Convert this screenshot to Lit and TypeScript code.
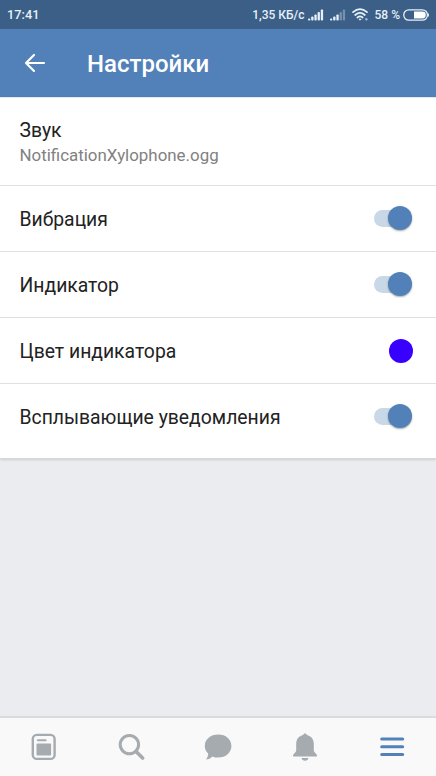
import { LitElement, html, css, svg } from 'lit';
import { customElement, property, state } from 'lit/decorators.js';
import { classMap } from 'lit/directives/class-map.js';

// clock, network and battery strip at the top
@customElement('status-bar')
export class StatusBar extends LitElement {
  static styles = css`
    :host {
      display: flex;
      align-items: center;
      height: 29px;
      box-sizing: border-box;
      padding: 0 7px 0 7px;
      background: #3b5f87;
      color: #e6f0fa;
      font-size: 12px;
      font-weight: 500;
      line-height: 30px;
      white-space: pre;
    }

    .time {
      flex: 1;
      font-size: 12.8px;
    }

    .speed {
      font-size: 12px;
    }

    .percent {
      font-size: 12px;
      margin-left: 6px;
    }

    svg {
      display: block;
      flex: none;
    }

    .signal {
      margin-left: 3px;
    }

    .second {
      margin-left: 6px;
    }

    .wifi {
      margin-left: 6px;
    }

    .battery {
      margin-left: 3px;
    }
  `;

  // five rising bars, the ones above the level are dimmed
  signal(level: number, cls: string) {
    return html`
      <svg class="signal ${cls}" width="16" height="12" viewBox="0 0 16 12" fill="#e6f0fa">
        ${[2, 4, 6, 8.5, 11].map(
          (h, i) => svg`<rect x=${i * 3.2} y=${11.5 - h} width="2.3" height=${h} rx=".8" opacity=${i < level ? 1 : 0.35} />`
        )}
      </svg>
    `;
  }

  render() {
    return html`
      <span class="time">17:41</span>
      <span class="speed">1,35 КБ/с</span>
      ${this.signal(5, '')} ${this.signal(3, 'second')}
      <svg class="wifi" width="17" height="13" viewBox="0 0 17 13" fill="none" stroke="#e6f0fa" stroke-width="1.7" stroke-linecap="round">
        <path d="M1 4.2Q8 -1.8 15 4.2M3.2 7Q8 2.8 12.8 7M5.4 9.5Q8 7.3 10.6 9.5" />
        <circle cx="8" cy="11.4" r=".7" fill="#e6f0fa" stroke-width=".8" />
        <circle cx="14.4" cy="11.3" r="1.2" fill="#8fb6e6" stroke="none" />
      </svg>
      <span class="percent">58 %</span>
      <svg class="battery" width="26" height="12" viewBox="0 0 26 12">
        <rect x=".8" y=".8" width="23.6" height="10.4" rx="5" fill="none" stroke="#e6f0fa" stroke-width="1.3" />
        <path d="M11 2.6H19.4A3.4 3.4 0 0 1 19.4 9.4H11Z" fill="#fff" />
        <path d="M25.3 4.4V7.6" stroke="#e6f0fa" stroke-width="1.2" />
      </svg>
    `;
  }
}

@customElement('toggle-switch')
export class ToggleSwitch extends LitElement {
  @property({ type: Boolean }) on = false;

  static styles = css`
    :host {
      display: block;
    }

    .track {
      display: flex;
      align-items: center;
      width: 38px;
      height: 17px;
      border-radius: 9px;
      background: #d5d7da;
    }

    .knob {
      width: 24px;
      height: 24px;
      flex: none;
      border-radius: 50%;
      background: #f5f5f5;
      box-shadow: 0 1px 2px rgba(0, 0, 0, 0.35);
    }

    .on {
      justify-content: flex-end;
      background: #c8d8e7;
    }

    .on .knob {
      background: #5181b8;
    }
  `;

  render() {
    return html`
      <div class="track ${classMap({ on: this.on })}">
        <div class="knob"></div>
      </div>
    `;
  }
}

@customElement('tab-bar')
export class TabBar extends LitElement {
  static styles = css`
    :host {
      display: grid;
      grid-template-columns: repeat(5, 1fr);
      height: 60px;
      box-sizing: border-box;
      border-top: 2px solid #d9dbdc;
      background: #f9f9fa;
      color: #a6abb0;
    }

    .tab {
      display: flex;
      align-items: center;
      justify-content: center;
    }

    .active {
      color: #5181b8;
    }

    svg {
      display: block;
    }
  `;

  icons = [
    // news
    svg`<rect x="2.8" y="1.9" width="21.8" height="24" rx="4" fill="none" stroke="currentColor" stroke-width="2.4" />
      <path d="M7.8 7.2H15.6" stroke="currentColor" stroke-width="2" stroke-linecap="round" />
      <rect x="6.5" y="10.4" width="14.6" height="12.2" rx="1" fill="currentColor" />`,
    // search
    svg`<circle cx="12.4" cy="11.6" r="9.2" fill="none" stroke="currentColor" stroke-width="3" />
      <path d="M19 18.4L25.6 25" stroke="currentColor" stroke-width="3.6" stroke-linecap="round" />`,
    // messages
    svg`<path d="M14.2 1.6C21.8 1.6 27.4 6.4 27.4 13S21.8 24.6 14.2 24.6C12 24.6 10 24.2 8.4 23.4C6.6 25.4 4.4 26.4 2 26.4C3.6 24.8 4.2 22.6 4.2 20.6C2 18.6 .8 16.2 .8 13C.8 6.4 6.6 1.6 14.2 1.6Z" fill="currentColor" />`,
    // notifications
    svg`<path d="M14 .4C15 .4 15.7 1 15.9 1.9C20.3 2.9 22.8 6.2 22.8 10.6V17.1C22.8 19 24 20 25.2 20.9C26.6 22 26.2 23.6 24.8 23.6H3.2C1.8 23.6 1.4 22 2.8 20.9C4 20 5.2 19 5.2 17.1V10.6C5.2 6.2 7.7 2.9 12.1 1.9C12.3 1 13 .4 14 .4Z" fill="currentColor" />
      <path d="M10.6 25H17.4C17.2 26.8 15.8 27.7 14 27.7S10.8 26.8 10.6 25Z" fill="currentColor" />`,
    // menu
    svg`<path d="M3.7 6H24.7M3.7 13.8H24.7M3.7 21.5H24.7" stroke="currentColor" stroke-width="3" stroke-linecap="round" />`,
  ];

  render() {
    return this.icons.map(
      (icon, i) => html`
        <div class="tab ${classMap({ active: i === 4 })}">
          <svg width="28" height="28" viewBox="0 0 28 28">${icon}</svg>
        </div>
      `
    );
  }
}

@customElement('app-root')
export class AppRoot extends LitElement {
  @state() rows = [
    { title: 'Вибрация', on: true },
    { title: 'Индикатор', on: true },
    { title: 'Цвет индикатора', color: '#3700ff' },
    { title: 'Всплывающие уведомления', on: true },
  ];

  static styles = css`
    :host {
      display: flex;
      flex-direction: column;
      height: 776px;
      background: #ebecf0;
      font-family: Roboto, 'Noto Sans', sans-serif;
    }

    .header {
      display: flex;
      align-items: center;
      height: 68px;
      padding-left: 24px;
      gap: 41px;
      background: #5181b8;
      color: #fff;
      font-size: 24px;
      font-weight: 500;
    }

    .header span {
      padding-top: 2px;
    }

    .list {
      padding: 8px 0 9px;
      background: #fff;
      border-top: 1px solid #e3e9f2;
      border-bottom: 1px solid #d6d8db;
      box-shadow: 0 1px 2px rgba(0, 0, 0, 0.12);
    }

    .row {
      display: flex;
      align-items: center;
      justify-content: space-between;
      height: 65px;
      padding: 0 24px 0 19.5px;
      border-top: 1px solid #dfe0e1;
      color: #222;
      font-size: 19.35px;
    }

    .row span {
      padding-top: 1px;
    }

    .sound {
      display: block;
      box-sizing: border-box;
      height: 79px;
      padding-top: 13px;
      border-top: none;
      line-height: 23px;
    }

    .file {
      color: #818181;
      font-size: 16.9px;
      line-height: 26px;
    }

    .color {
      width: 24px;
      height: 24px;
      margin-right: -1px;
      border-radius: 50%;
    }

    toggle-switch {
      padding-bottom: 1px;
    }

    .space {
      flex: 1;
    }
  `;

  render() {
    return html`
      <status-bar></status-bar>
      <div class="header">
        <svg width="22" height="20" viewBox="0 0 22 20" fill="none" stroke="#fff" stroke-width="2.2" stroke-linecap="round" stroke-linejoin="round">
          <path d="M20 10H2M10 2L2 10L10 18" />
        </svg>
        <span>Настройки</span>
      </div>
      <div class="list">
        <div class="row sound">
          <div>Звук</div>
          <div class="file">NotificationXylophone.ogg</div>
        </div>
        ${this.rows.map(
          (row) => html`
            <div class="row">
              <span>${row.title}</span>
              ${row.color
                ? html`<div class="color" style="background: ${row.color}"></div>`
                : html`<toggle-switch ?on=${row.on}></toggle-switch>`}
            </div>
          `
        )}
      </div>
      <div class="space"></div>
      <tab-bar></tab-bar>
    `;
  }
}
